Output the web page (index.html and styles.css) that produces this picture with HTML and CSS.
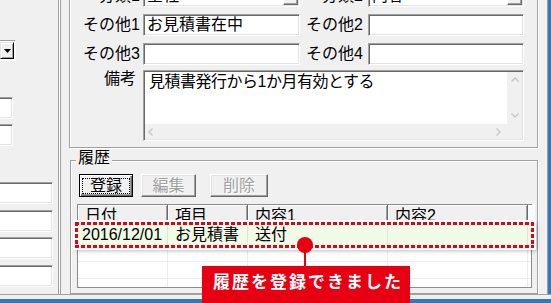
FILE: index.html
```html
<!DOCTYPE html>
<html lang="ja">
  <head>
    <meta charset="UTF-8" />
    <title>履歴</title>
    <link rel="stylesheet" href="styles.css">
  </head>
  <body>
    <div class="window">
      <div class="client">
        <aside class="side">
          <div class="combo">
            <span class="combo-btn">
              <svg width="7" height="4" viewBox="0 0 7 4"><polygon points="0,0 7,0 3.5,4" fill="#000"/></svg>
            </span>
          </div>
          <div class="field side-short first"></div>
          <div class="field side-short"></div>
          <div class="field side-long first"></div>
          <div class="field side-long"></div>
          <div class="field side-long tight"></div>
          <div class="field side-long"></div>
        </aside>

        <div class="divider"></div>

        <main class="main">
          <section class="group info">
            <div class="form">
              <label class="lbl">分類1</label>
              <div class="field pick"><span class="pick-text">全社</span><span class="pick-btn"></span></div>
              <label class="lbl lbl-r">分類2</label>
              <div class="field pick"><span class="pick-text">内容</span><span class="pick-btn"></span></div>

              <label class="lbl">その他1</label>
              <div class="field">お見積書在中</div>
              <label class="lbl lbl-r">その他2</label>
              <div class="field"></div>

              <label class="lbl">その他3</label>
              <div class="field"></div>
              <label class="lbl lbl-r">その他4</label>
              <div class="field"></div>

              <label class="lbl memo-lbl">備考</label>
              <div class="field memo">
                <div class="memo-text">見積書発行から1か月有効とする</div>
                <div class="vscroll">
                  <svg width="8" height="5" viewBox="0 0 8 5"><path d="M0.5 4.5 4 1 7.5 4.5" fill="none" stroke="#c4c4c4" stroke-width="1.3"/></svg>
                  <svg width="8" height="5" viewBox="0 0 8 5"><path d="M0.5 0.5 4 4 7.5 0.5" fill="none" stroke="#c4c4c4" stroke-width="1.3"/></svg>
                </div>
                <div class="hscroll">
                  <svg width="5" height="8" viewBox="0 0 5 8"><path d="M4.5 0.5 1 4 4.5 7.5" fill="none" stroke="#c4c4c4" stroke-width="1.3"/></svg>
                  <svg width="5" height="8" viewBox="0 0 5 8"><path d="M0.5 0.5 4 4 0.5 7.5" fill="none" stroke="#c4c4c4" stroke-width="1.3"/></svg>
                </div>
                <div class="corner"></div>
              </div>
            </div>
          </section>

          <section class="group history">
            <div class="group-title">履歴</div>
            <div class="toolbar">
              <button class="btn btn-default"><span class="focus">登録</span></button>
              <button class="btn btn-edit" disabled>編集</button>
              <button class="btn btn-delete" disabled>削除</button>
            </div>
            <div class="list">
              <div class="list-head">
                <span>日付</span><span>項目</span><span>内容1</span><span>内容2</span><span></span>
              </div>
              <div class="list-body">
                <div class="list-row"><span></span><span></span><span></span><span></span><span></span></div>
                <div class="list-row"><span></span><span></span><span></span><span></span><span></span></div>
                <div class="list-row"><span></span><span></span><span></span><span></span><span></span></div>
                <div class="list-row"><span></span><span></span><span></span><span></span><span></span></div>
              </div>
              <div class="highlight">
                <div class="hl-row">
                  <span>2016/12/01</span><span>お見積書</span><span>送付</span><span></span><span></span>
                </div>
              </div>
            </div>
          </section>
        </main>

        <div class="edge"></div>
      </div>
      <div class="bottom"></div>

      <div class="callout-dot"></div>
      <div class="callout-stem"></div>
      <div class="callout">履歴を登録できました</div>
    </div>
  </body>
</html>
```

FILE: styles.css
```css
body {
  margin: 0px;
  background: #f0f0f0;
  color: #000;
  font: 16px/18px "Liberation Sans", "Noto Sans CJK JP", sans-serif;
  overflow: hidden;
}

.window {
  width: 551px;
  height: 303px;
  display: flex;
  flex-direction: column;
  position: relative;
  overflow: hidden;
}

.client {
  height: 294px;
  display: flex;
  overflow: hidden;
  flex: none;
}

.bottom {
  height: 4px;
  flex: none;
  border-top: 1px solid #a0a0a0;
  border-bottom: 4px solid #3a75ad;
}

.edge {
  width: 3px;
  flex: none;
  border-left: 1px solid #a0a0a0;
  background: #3a75ad;
}

.divider {
  width: 1px;
  flex: none;
  background: #fff;
  border-left: 1px solid #a0a0a0;
  border-right: 1px solid #a0a0a0;
}

/* sunken edit box */
.field {
  box-sizing: border-box;
  height: 22px;
  padding: 1px 3px;
  background: #fff;
  border: 1px solid;
  border-color: #a0a0a0 #fff #fff #a0a0a0;
  box-shadow: inset 1px 1px 0 #696969, inset -1px -1px 0 #e3e3e3;
  white-space: nowrap;
  overflow: hidden;
}

/* left panel, cut by the window edge */
.side {
  width: 58px;
  flex: none;
  display: flex;
  flex-direction: column;
  align-items: flex-start;
  overflow: hidden;
}

.combo {
  box-sizing: border-box;
  width: 60px;
  height: 21px;
  margin: 40px 0 0 -44px;
  padding: 1px;
  display: flex;
  justify-content: flex-end;
  background: #fff;
  border: 1px solid;
  border-color: #a0a0a0 #fff #fff #a0a0a0;
}

.combo-btn {
  box-sizing: border-box;
  width: 14px;
  display: flex;
  align-items: center;
  justify-content: center;
  background: #f0f0f0;
  border: 1px solid;
  border-color: #e3e3e3 #000 #000 #e3e3e3;
  box-shadow: inset 1px 1px 0 #fff, inset -1px -1px 0 #a0a0a0;
}

.side-short {
  width: 60px;
  margin: 5px 0 0 -47px;
}

.side-long {
  width: 60px;
  margin: 6px 0 0 -7px;
}

.side-short.first {
  margin-top: 36px;
}

.side-long.first {
  margin-top: 36px;
}

.side-long.tight {
  margin-top: 5px;
}

/* right panel */
.main {
  flex: 1;
  min-width: 0;
  padding-left: 8px;
  display: flex;
  flex-direction: column;
  align-items: flex-start;
}

.group {
  box-sizing: border-box;
  flex: none;
  border: 1px solid #a0a0a0;
  box-shadow: 1px 1px 0 #fff, inset 1px 1px 0 #fff;
}

.info {
  width: 469px;
  margin-top: -30px;
  padding: 14px 13px 4px 0px;
}

.form {
  display: grid;
  grid-template-columns: 73px 157px 68px 156px;
  grid-template-rows: 22px 22px 22px 71px;
  row-gap: 7px;
}

.lbl {
  display: flex;
  align-items: center;
  justify-content: flex-end;
  padding-right: 3px;
  white-space: nowrap;
}

.lbl-r {
  padding-right: 5px;
}

.memo-lbl {
  align-self: start;
  margin-top: -2px;
  padding-right: 7px;
}

.pick {
  display: flex;
  padding: 0px 1px 0px 3px;
  line-height: 20px;
}

.pick-text {
  flex: 1;
}

.pick-btn {
  box-sizing: border-box;
  width: 15px;
  margin: 1px 0px;
  background: #f0f0f0;
  border: 1px solid;
  border-color: #fff #696969 #696969 #fff;
  box-shadow: inset -1px -1px 0 #a0a0a0;
}

.memo {
  grid-column: 2 / 5;
  align-self: start;
  height: 71px;
  margin-top: -2px;
  padding: 1px;
  display: grid;
  grid-template-columns: 1fr 15px;
  grid-template-rows: 1fr 15px;
  white-space: normal;
}

.memo-text {
  padding: 1px 4px;
  letter-spacing: -0.5px;
}

.vscroll {
  background: #f0f0f0;
  display: flex;
  flex-direction: column;
  align-items: center;
  justify-content: space-between;
  padding: 5px 0px 6px;
}

.hscroll {
  background: #f0f0f0;
  display: flex;
  align-items: center;
  justify-content: space-between;
  padding: 0px 6px 0px 3px;
}

.corner {
  background: #f0f0f0;
}

/* history */
.history {
  width: 468px;
  margin: 12px 0 0 1px;
  padding: 0px 5px 5px 6px;
}

.group-title {
  width: fit-content;
  margin: -12px 0 0 -1px;
  padding: 0px 2px;
  background: #f0f0f0;
}

.toolbar {
  display: flex;
  margin-top: 7px;
  padding-left: 2px;
}

.btn {
  box-sizing: border-box;
  height: 23px;
  padding: 0px;
  font: inherit;
  color: #000;
  background: #f0f0f0;
  border: 1px solid;
  border-color: #fff #696969 #696969 #fff;
  box-shadow: inset -1px -1px 0 #a0a0a0, inset 1px 1px 0 #e3e3e3;
  display: flex;
  align-items: center;
  justify-content: center;
}

.btn:disabled {
  color: #a0a0a0;
  text-shadow: 1px 1px 0 #fff;
}

.btn-default {
  width: 54px;
  border-color: #000;
  box-shadow: inset 1px 1px 0 #fff, inset -1px -1px 0 #696969, inset -2px -2px 0 #a0a0a0;
}

.focus {
  border: 1px dotted #000;
  padding: 0px 7px;
  line-height: 14px;
}

.btn-edit {
  width: 55px;
  margin-left: 8px;
}

.btn-delete {
  width: 58px;
  margin-left: 14px;
}

.list {
  box-sizing: border-box;
  width: 455px;
  height: 84px;
  margin-top: 7px;
  position: relative;
  background: #fff;
  border: 1px solid #8c8c8c;
}

.list-head,
.list-row,
.hl-row {
  display: grid;
  grid-template-columns: 90px 80px 140px 140px 1fr;
}

.list-head {
  height: 23px;
  background: #f0f0f0;

  > span {
    padding: 2px 0 0 7px;
    border-right: 1px solid #696969;
    box-shadow: inset 1px 1px 0 #fff, inset -1px 0 0 #a0a0a0;
    white-space: nowrap;
  }

  > span:last-child {
    border: none;
    box-shadow: none;
    background: #fff;
  }
}

.list-body {
  height: 59px;
  overflow: hidden;
}

.list-row {
  box-sizing: border-box;
  height: 17px;
  border-bottom: 1px solid #ececec;

  > span {
    border-right: 1px solid #ececec;
  }

  > span:last-child {
    border: none;
  }
}

/* magnified row with red dotted frame */
.highlight {
  box-sizing: border-box;
  position: absolute;
  left: -3px;
  top: 17px;
  width: 459px;
  height: 26px;
  padding: 3px;
  background:
    repeating-linear-gradient(to right, #e60012 0 4px, #fff 4px 6px) top left / 100% 3px no-repeat,
    repeating-linear-gradient(to right, #e60012 0 4px, #fff 4px 6px) bottom left / 100% 3px no-repeat,
    repeating-linear-gradient(to bottom, #e60012 0 4px, #fff 4px 6px) top left / 3px 100% no-repeat,
    repeating-linear-gradient(to bottom, #e60012 0 4px, #fff 4px 6px) top right / 3px 100% no-repeat,
    #fff;
  box-shadow: 0 0 0 2px #fff, 2px 2px 4px 1px rgba(0, 0, 0, 0.25);
}

.hl-row {
  height: 20px;
  line-height: 20px;
  background: #effbe6;

  > span {
    padding-left: 7px;
    border-right: 1px solid #dde6d6;
    white-space: nowrap;
  }

  > span:first-child {
    padding-left: 4px;
  }

  > span:last-child {
    border: none;
  }
}

/* callout */
.callout-dot {
  position: absolute;
  left: 297px;
  top: 237px;
  width: 16px;
  height: 16px;
  border-radius: 50%;
  background: #e60012;
  z-index: 2;
}

.callout-stem {
  position: absolute;
  left: 304px;
  top: 250px;
  width: 2px;
  height: 17px;
  background: #e60012;
  z-index: 2;
}

.callout {
  box-sizing: border-box;
  position: absolute;
  left: 202px;
  top: 266px;
  width: 208px;
  height: 37px;
  padding: 0 0 3px 11px;
  display: flex;
  align-items: center;
  background: #e60012;
  color: #fff;
  font-size: 17px;
  font-weight: bold;
  letter-spacing: 2px;
  white-space: nowrap;
  z-index: 2;
}
```
